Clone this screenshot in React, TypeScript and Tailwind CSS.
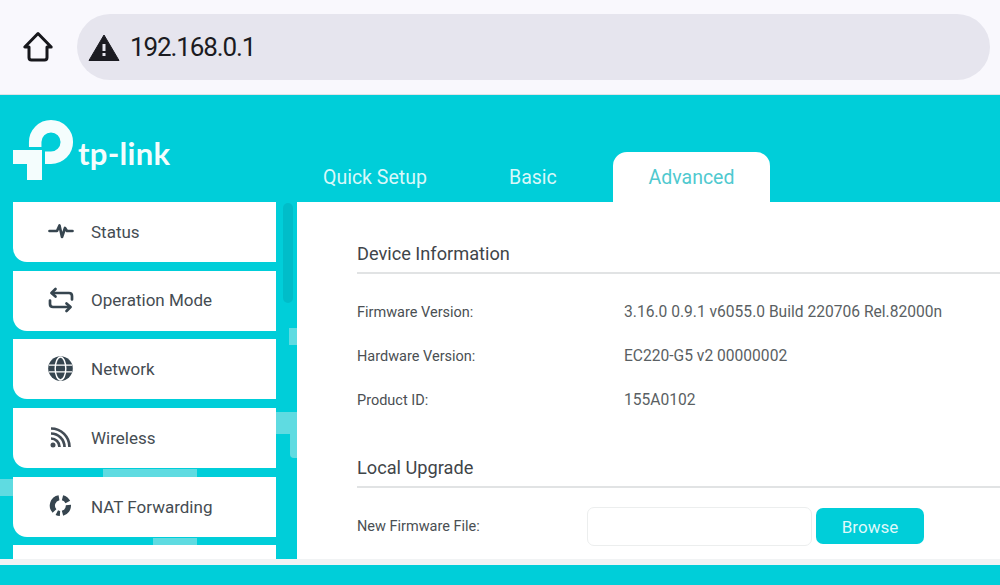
import React from "react";

const roboto = "font-['Roboto',sans-serif]";

function HomeIcon() {
  return (
    <svg width="32" height="32" viewBox="0 0 32 32" fill="none" stroke="#17171c" strokeWidth="3" strokeLinejoin="round" strokeLinecap="round">
      <path d="M16 2.500 2.800 16H7V26.500Q7 29 9.500 29H22.500Q25 29 25 26.500V16H29.200Z" />
    </svg>
  );
}

function WarnIcon() {
  return (
    <svg width="32" height="27" viewBox="0 0 32 27">
      <path d="M16 1 31 26.500H1Z" fill="#1b1b21" stroke="#1b1b21" strokeWidth="1" strokeLinejoin="round" />
      <rect x="14.500" y="10" width="3" height="7" fill="#e6e5ee" />
      <rect x="14.500" y="19" width="3" height="3" fill="#e6e5ee" />
    </svg>
  );
}

function Logo() {
  return (
    <svg width="62" height="62" viewBox="0 0 62 62">
      <path d="M1 31H30V61H15V45H1Z" fill="#f4fdfd" />
      <path d="M23.200 28V23A15.800 15.800 0 1 1 39 38.800H33" fill="none" stroke="#f4fdfd" strokeWidth="12.500" />
    </svg>
  );
}

function StatusIcon() {
  return (
    <svg width="26" height="18" viewBox="0 0 26 18" fill="none" stroke="#36454f" strokeWidth="2.700" strokeLinecap="round" strokeLinejoin="round">
      <path d="M1.500 9H9L11.500 3.500 14 15 17 6 19 9H24.500" />
    </svg>
  );
}

function ModeIcon() {
  return (
    <svg width="26" height="26" viewBox="0 0 26 26" fill="none" stroke="#36454f" strokeWidth="2.700" strokeLinecap="round" strokeLinejoin="round">
      <path d="M4 6H21Q24 6 24 9V12.500" />
      <path d="M22 20H5Q2 20 2 17V13.500" />
      <path d="M7.500 2 3.500 6 7.500 9.500" />
      <path d="M18.500 16.500 22.500 20 18.500 24" />
    </svg>
  );
}

function GlobeIcon() {
  return (
    <svg width="25" height="25" viewBox="0 0 26 26">
      <circle cx="13" cy="13" r="12.800" fill="#36454f" />
      <g fill="none" stroke="#ffffff" strokeWidth="1.500">
        <path d="M1 9.500H25M1 16.500H25" />
        <ellipse cx="13" cy="13" rx="5.500" ry="12" />
      </g>
    </svg>
  );
}

function WifiIcon() {
  return (
    <svg width="21" height="21" viewBox="0 0 21 21" fill="none" stroke="#434c55" strokeWidth="2.700">
      <circle cx="3" cy="18" r="2.500" fill="#434c55" stroke="none" />
      <path d="M1 11.500A8.500 8.500 0 0 1 9.500 20" />
      <path d="M1 6.500A13.500 13.500 0 0 1 14.500 20" />
      <path d="M1 1.500A18.500 18.500 0 0 1 19.500 20" />
    </svg>
  );
}

function NatIcon() {
  return (
    <svg width="23" height="23" viewBox="0 0 23 23" fill="none" stroke="#36454f" strokeWidth="5.200">
      <path d="M5.500 17A8 8 0 0 1 10 3.700" />
      <path d="M13.500 3.700A8 8 0 0 1 18.800 8" />
      <path d="M19.400 11A8 8 0 0 1 13.500 19.200" />
      <path d="M11 19.500A8 8 0 0 1 7.800 18.600" />
    </svg>
  );
}

const menu: { label: string; icon: React.ReactNode }[] = [
  { label: "Status", icon: <StatusIcon /> },
  { label: "Operation Mode", icon: <ModeIcon /> },
  { label: "Network", icon: <GlobeIcon /> },
  { label: "Wireless", icon: <WifiIcon /> },
  { label: "NAT Forwarding", icon: <NatIcon /> },
];

function InfoRow({ label, value }: { label: string; value: string }) {
  return (
    <div className="flex h-[43.800px] items-center">
      <div className="w-[267px] text-[14.500px] text-[#4a4f53]">{label}</div>
      <div className="text-[15.600px] text-[#5a5f63]">{value}</div>
    </div>
  );
}

export default function App() {
  return (
    <div className={`relative flex h-[585px] w-[1000px] flex-col overflow-hidden bg-[#00ced9] ${roboto}`}>
      <div className="flex h-[95px] shrink-0 items-center border-b border-[#dfe3e6] bg-[#f9f8fd]">
        <div className="flex w-[77px] justify-center pr-[2px]">
          <HomeIcon />
        </div>
        <div className="flex h-[66px] w-[913px] items-center gap-[10px] rounded-full bg-[#e6e5ee] pl-[11px]">
          <WarnIcon />
          <span className="text-[26px] leading-none tracking-[-1.1px] text-[#1b1b21]">192.168.0.1</span>
        </div>
      </div>

      <div className="flex h-[107px] shrink-0">
        <div className="flex w-[297px] items-start gap-[4px] pl-[12px] pt-[24px]">
          <Logo />
          <span className="mt-[19px] font-['Lato',sans-serif] text-[31px] leading-none font-bold tracking-[0.3px] text-[#f4fdfd]">tp-link</span>
        </div>
        <div className="flex items-end">
          <div className="flex h-[50px] w-[212px] items-center pl-[26px] pt-[1px] text-[19.500px] text-[#d9f8f9]">Quick Setup</div>
          <div className="flex h-[50px] w-[104px] items-center pt-[1px] text-[19.500px] text-[#d9f8f9]">Basic</div>
          <div className="flex h-[50px] w-[157px] items-center justify-center rounded-t-[14px] bg-white pt-[1px] text-[19.500px] text-[#4fc9cf]">Advanced</div>
        </div>
      </div>

      <div className="flex h-[357px] shrink-0">
        <div className="relative flex w-[297px] shrink-0 overflow-hidden">
          <div className="absolute top-[126px] left-[289px] h-[17px] w-[8px] bg-[#5fdbe1]" />
          <div className="absolute top-[210px] left-[276px] h-[22px] w-[21px] bg-[#5fdbe1]" />
          <div className="absolute top-[230px] left-[290px] h-[26px] w-[7px] rounded-bl-[4px] bg-[#5fdbe1]" />
          <div className="absolute top-[277px] left-[0px] h-[17px] w-[13px] bg-[#5fdbe1]" />
          <div className="absolute top-[267px] left-[103px] h-[9px] w-[94px] bg-[#5fdbe1]" />
          <div className="absolute top-[336px] left-[153px] h-[9px] w-[44px] bg-[#5fdbe1]" />
          <div className="relative ml-[13px] flex w-[263px] flex-col gap-[8.700px]">
            {menu.map((m) => (
              <div key={m.label} className="flex h-[60px] shrink-0 items-center rounded-bl-[14px] bg-white">
                <div className="flex w-[78px] shrink-0 justify-center pb-[2px] pl-[17px]">{m.icon}</div>
                <span className="pt-[1px] text-[17px] text-[#454c52]">{m.label}</span>
              </div>
            ))}
            <div className="h-[20px] shrink-0 bg-white" />
          </div>
          <div className="relative mt-[1px] ml-[7px] h-[100px] w-[10px] rounded-full bg-[#00bdc9]" />
        </div>

        <div className="flex-1 bg-white pl-[60px]">
          <h2 className="flex h-[72px] items-end border-b-2 border-[#e1e3e4] pb-[6px] text-[18.200px] leading-[24px] font-normal text-[#3f4549]">Device Information</h2>
          <div className="pt-[17px]">
            <InfoRow label="Firmware Version:" value="3.16.0 0.9.1 v6055.0 Build 220706 Rel.82000n" />
            <InfoRow label="Hardware Version:" value="EC220-G5 v2 00000002" />
            <InfoRow label="Product ID:" value="155A0102" />
          </div>
          <h2 className="mt-[29.600px] flex h-[36px] items-end border-b-2 border-[#e1e3e4] pb-[6px] text-[18.200px] leading-[24px] font-normal text-[#3f4549]">Local Upgrade</h2>
          <div className="flex h-[77px] items-center">
            <div className="w-[230px] pt-[1px] text-[14.500px] text-[#4a4f53]">New Firmware File:</div>
            <div className="h-[39px] w-[225px] rounded-[7px] border border-[#eceeee] bg-white" />
            <div className="ml-[4px] flex h-[36px] w-[108px] items-center justify-center rounded-[7px] bg-[#00ced9] pt-[2px] text-[17px] text-[#dff9fa]">Browse</div>
          </div>
        </div>
      </div>

      <div className="h-[6px] shrink-0 bg-[#f1f3f4]" />
    </div>
  );
}
